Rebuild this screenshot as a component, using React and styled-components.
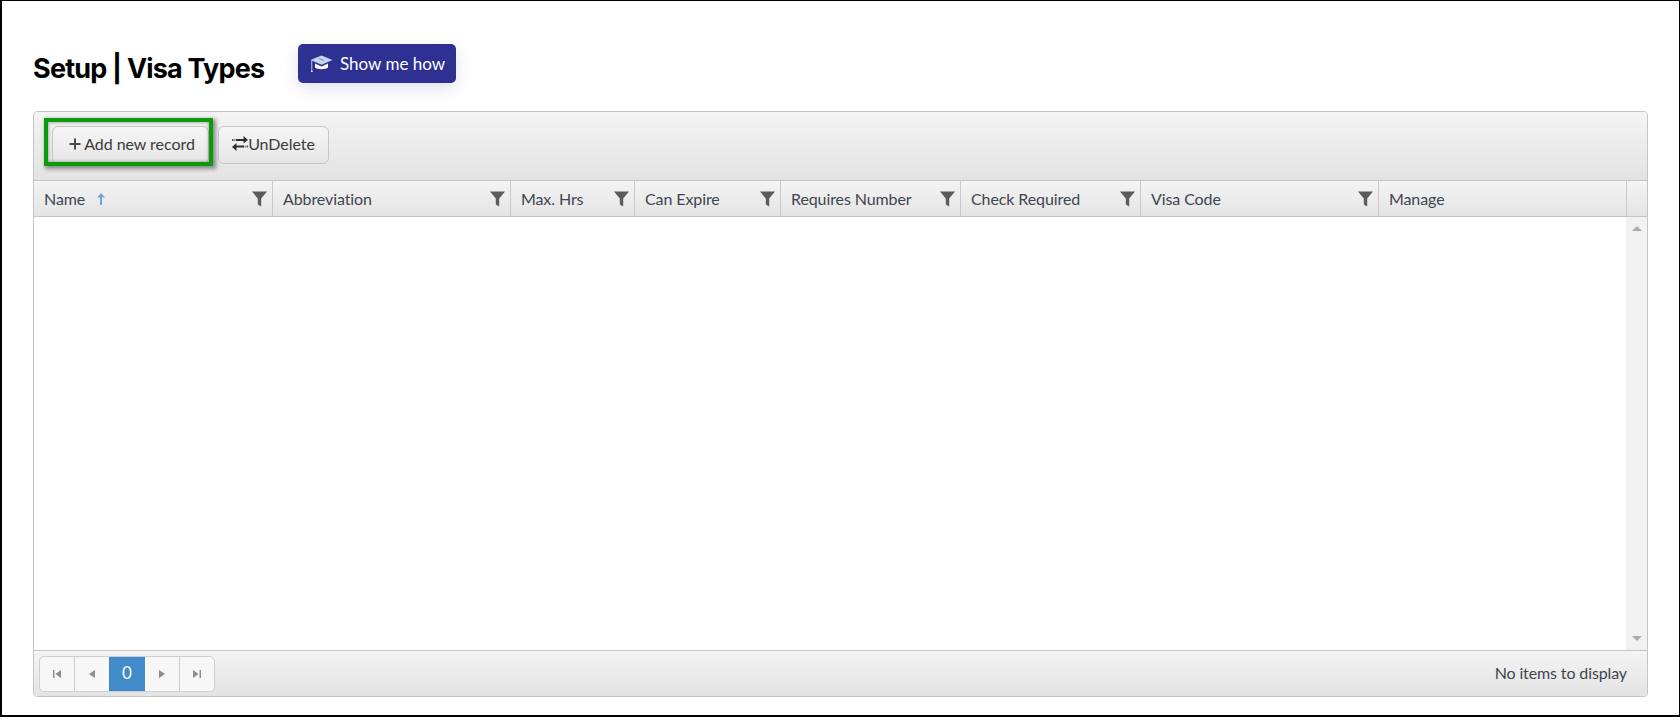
import React from 'react';
import styled, { createGlobalStyle } from 'styled-components';

const GlobalStyle = createGlobalStyle`
  html, body {
    margin: 0;
    padding: 0;
    background: #fff;
  }
  * { box-sizing: border-box; }
`;

const Frame = styled.div`
  width: 1680px;
  height: 717px;
  border: 1px solid #000;
  border-left-width: 2px;
  border-bottom-width: 2px;
  padding: 43px 31px 0 31px;
  font-family: Lato, sans-serif;
  color: #3b3b3b;
  overflow: hidden;
`;

const TitleRow = styled.div`
  display: flex;
  align-items: flex-start;
  height: 67px;
`;

const Title = styled.h1`
  margin: 7px 0 0;
  font-family: Inter, sans-serif;
  font-size: 27px;
  line-height: 36px;
  font-weight: 700;
  letter-spacing: -0.8px;
  color: #000;
  width: 265px;
`;

const HowButton = styled.button`
  display: flex;
  align-items: center;
  gap: 7px;
  width: 158px;
  height: 39px;
  padding: 0 0 0 12px;
  border: 0;
  border-radius: 5px;
  background: #2e3192;
  color: #fff;
  font-family: Lato, sans-serif;
  font-size: 17px;
  box-shadow: 0 6px 16px rgba(46, 49, 146, 0.14);
`;

const Grid = styled.div`
  width: 1615px;
  height: 586px;
  display: flex;
  flex-direction: column;
  border: 1px solid #c5c5c5;
  border-radius: 4px;
  overflow: hidden;
`;

const Toolbar = styled.div`
  height: 69px;
  flex: none;
  display: flex;
  align-items: flex-start;
  gap: 9px;
  padding: 14px 0 0 18px;
  background: linear-gradient(#f4f4f4, #e3e3e3);
  border-bottom: 1px solid #c5c5c5;
`;

const ToolButton = styled.button`
  position: relative;
  height: 38px;
  width: ${(p) => p.$width}px;
  display: flex;
  align-items: center;
  justify-content: center;
  padding: 0 0 3px ${(p) => p.$shift || 0}px;
  border: 1px solid #c5c5c5;
  border-radius: 6px;
  background: linear-gradient(#f6f6f6, #e6e6e6);
  color: #3b3b3b;
  font-family: Lato, sans-serif;
  font-size: 16px;
  letter-spacing: -0.05px;
`;

// green annotation box drawn over the button
const HighlightBox = styled.span`
  position: absolute;
  top: -9px;
  left: -9px;
  right: -5px;
  bottom: -3px;
  border: 4px solid #0a9a0a;
  box-shadow: inset 0 0 3px 1px rgba(0, 0, 0, 0.25), 2px 2px 4px 1px rgba(0, 0, 0, 0.4);
`;

const Header = styled.div`
  height: 36px;
  flex: none;
  display: flex;
  background: linear-gradient(#f4f4f4, #e4e4e4);
  border-bottom: 1px solid #c5c5c5;
`;

const HeaderCell = styled.div`
  width: ${(p) => p.$width}px;
  flex: none;
  display: flex;
  align-items: center;
  justify-content: space-between;
  padding: 0 5px 0 10px;
  border-right: 1px solid #c9c9c9;
  font-size: 16px;
  letter-spacing: -0.1px;
  color: #3f4650;
`;

const HeaderLabel = styled.span`
  display: flex;
  align-items: center;
  gap: 11px;
`;

const HeaderGap = styled.div`
  flex: 1;
`;

const Body = styled.div`
  flex: 1;
  display: flex;
  justify-content: flex-end;
  background: #fff;
`;

const ScrollTrack = styled.div`
  width: 21px;
  display: flex;
  flex-direction: column;
  justify-content: space-between;
  align-items: center;
  padding: 9px 0;
  background: #f1f1f1;
`;

const ScrollArrow = styled.span`
  width: 0;
  height: 0;
  border-left: 5px solid transparent;
  border-right: 5px solid transparent;
  ${(p) => (p.$down ? 'border-top: 5px solid #ababab;' : 'border-bottom: 5px solid #ababab;')}
`;

const Footer = styled.div`
  height: 46px;
  flex: none;
  display: flex;
  align-items: center;
  justify-content: space-between;
  padding: 0 20px 0 5px;
  background: linear-gradient(#f4f4f4, #e3e3e3);
  border-top: 1px solid #c5c5c5;
  font-size: 16px;
  color: #3f4650;
`;

const Pager = styled.div`
  display: flex;
  height: 36px;
  border: 1px solid #cfcfcf;
  border-radius: 5px;
  background: #f7f7f7;
  overflow: hidden;
`;

const PageButton = styled.div`
  width: ${(p) => p.$width || 35}px;
  display: flex;
  align-items: center;
  justify-content: center;
  border-right: ${(p) => (p.$divider ? '1px solid #cfcfcf' : '0')};
  color: #8a8a8a;
`;

const CurrentPage = styled.div`
  width: 36px;
  display: flex;
  align-items: center;
  justify-content: center;
  padding-bottom: 2px;
  background: #428bca;
  color: #fff;
  font-size: 17px;
  font-variant-numeric: lining-nums;
`;

const ItemCount = styled.span`
  padding-bottom: 3px;
  letter-spacing: -0.12px;
`;

const columns = [
  { label: 'Name', width: 239, sorted: true },
  { label: 'Abbreviation', width: 238 },
  { label: 'Max. Hrs', width: 124 },
  { label: 'Can Expire', width: 146 },
  { label: 'Requires Number', width: 180 },
  { label: 'Check Required', width: 180 },
  { label: 'Visa Code', width: 238 },
  { label: 'Manage', width: 248, noFilter: true },
];

const FilterIcon = () => (
  <svg width="15" height="16" viewBox="0 0 15 16">
    <path d="M0 0.5 H15 L9.2 7.5 V15.5 L5.8 13.5 V7.5 Z" fill="#5b5b5b" />
  </svg>
);

const SortArrow = () => (
  <svg width="10" height="13" viewBox="0 0 10 13">
    <path d="M5 1 L9 5.5 H6 V13 H4 V5.5 H1 Z" fill="#6ea6d8" />
  </svg>
);

const CapIcon = () => (
  <svg width="23" height="18" viewBox="0 0 23 18">
    <path d="M11.5 0.5 L22.5 5 L11.5 9.8 L0.5 5 Z" fill="#c9d2f0" />
    <path d="M5 8.6 L11.5 11.4 L18 8.6 V12.6 C16 14.8 7 14.8 5 12.6 Z" fill="#fff" />
    <path d="M1.4 5.6 H2.2 V14 H1.4 Z" fill="#dfe3f5" />
    <path d="M1.8 13.5 L2.8 17 H0.8 Z" fill="#dfe3f5" />
    <path d="M9 3.5 L14 5.5" stroke="#7f8ad0" strokeWidth="1" />
  </svg>
);

const PlusIcon = () => (
  <svg width="12" height="12" viewBox="0 0 12 12" style={{ marginRight: 3 }}>
    <path d="M5 0.5 H7 V5 H11.5 V7 H7 V11.5 H5 V7 H0.5 V5 H5 Z" fill="#4a4a4a" />
  </svg>
);

const SwapIcon = () => (
  <svg width="16" height="15" viewBox="0 0 16 15">
    <path d="M4 3 H11.5 V0 L16 4 L11.5 7.5 V5 H4 Z" fill="#2f2f2f" />
    <path d="M0 3 H1.5 V5 H0 Z M2.5 3 H3.4 V5 H2.5 Z" fill="#555" />
    <path d="M12 9.5 H4.5 V7 L0 11 L4.5 15 V11.5 H12 Z" fill="#2f2f2f" />
    <path d="M12.7 9.5 H13.6 V11.5 H12.7 Z M14.5 9.5 H16 V11.5 H14.5 Z" fill="#555" />
  </svg>
);

const PagerIcon = ({ d }) => (
  <svg width="10" height="10" viewBox="0 0 10 10">
    <path d={d} fill="#8c8c8c" />
  </svg>
);

export default function App() {
  return (
    <>
      <GlobalStyle />
      <Frame>
        <TitleRow>
          <Title>Setup | Visa Types</Title>
          <HowButton>
            <CapIcon />
            Show me how
          </HowButton>
        </TitleRow>
        <Grid>
          <Toolbar>
            <ToolButton $width={157} $shift={3}>
              <PlusIcon />
              Add new record
              <HighlightBox />
            </ToolButton>
            <ToolButton $width={111}>
              <SwapIcon />
              UnDelete
            </ToolButton>
          </Toolbar>
          <Header>
            {columns.map((col) => (
              <HeaderCell key={col.label} $width={col.width}>
                <HeaderLabel>
                  {col.label}
                  {col.sorted && <SortArrow />}
                </HeaderLabel>
                {!col.noFilter && <FilterIcon />}
              </HeaderCell>
            ))}
            <HeaderGap />
          </Header>
          <Body>
            <ScrollTrack>
              <ScrollArrow />
              <ScrollArrow $down />
            </ScrollTrack>
          </Body>
          <Footer>
            <Pager>
              <PageButton $divider>
                <PagerIcon d="M1 1 H2.5 V9 H1 Z M9 1 V9 L3.5 5 Z" />
              </PageButton>
              <PageButton $width={34}>
                <PagerIcon d="M8 1 V9 L2 5 Z" />
              </PageButton>
              <CurrentPage>0</CurrentPage>
              <PageButton $divider>
                <PagerIcon d="M2 1 V9 L8 5 Z" />
              </PageButton>
              <PageButton $width={34}>
                <PagerIcon d="M1 1 V9 L6.5 5 Z M7.5 1 H9 V9 H7.5 Z" />
              </PageButton>
            </Pager>
            <ItemCount>No items to display</ItemCount>
          </Footer>
        </Grid>
      </Frame>
    </>
  );
}
